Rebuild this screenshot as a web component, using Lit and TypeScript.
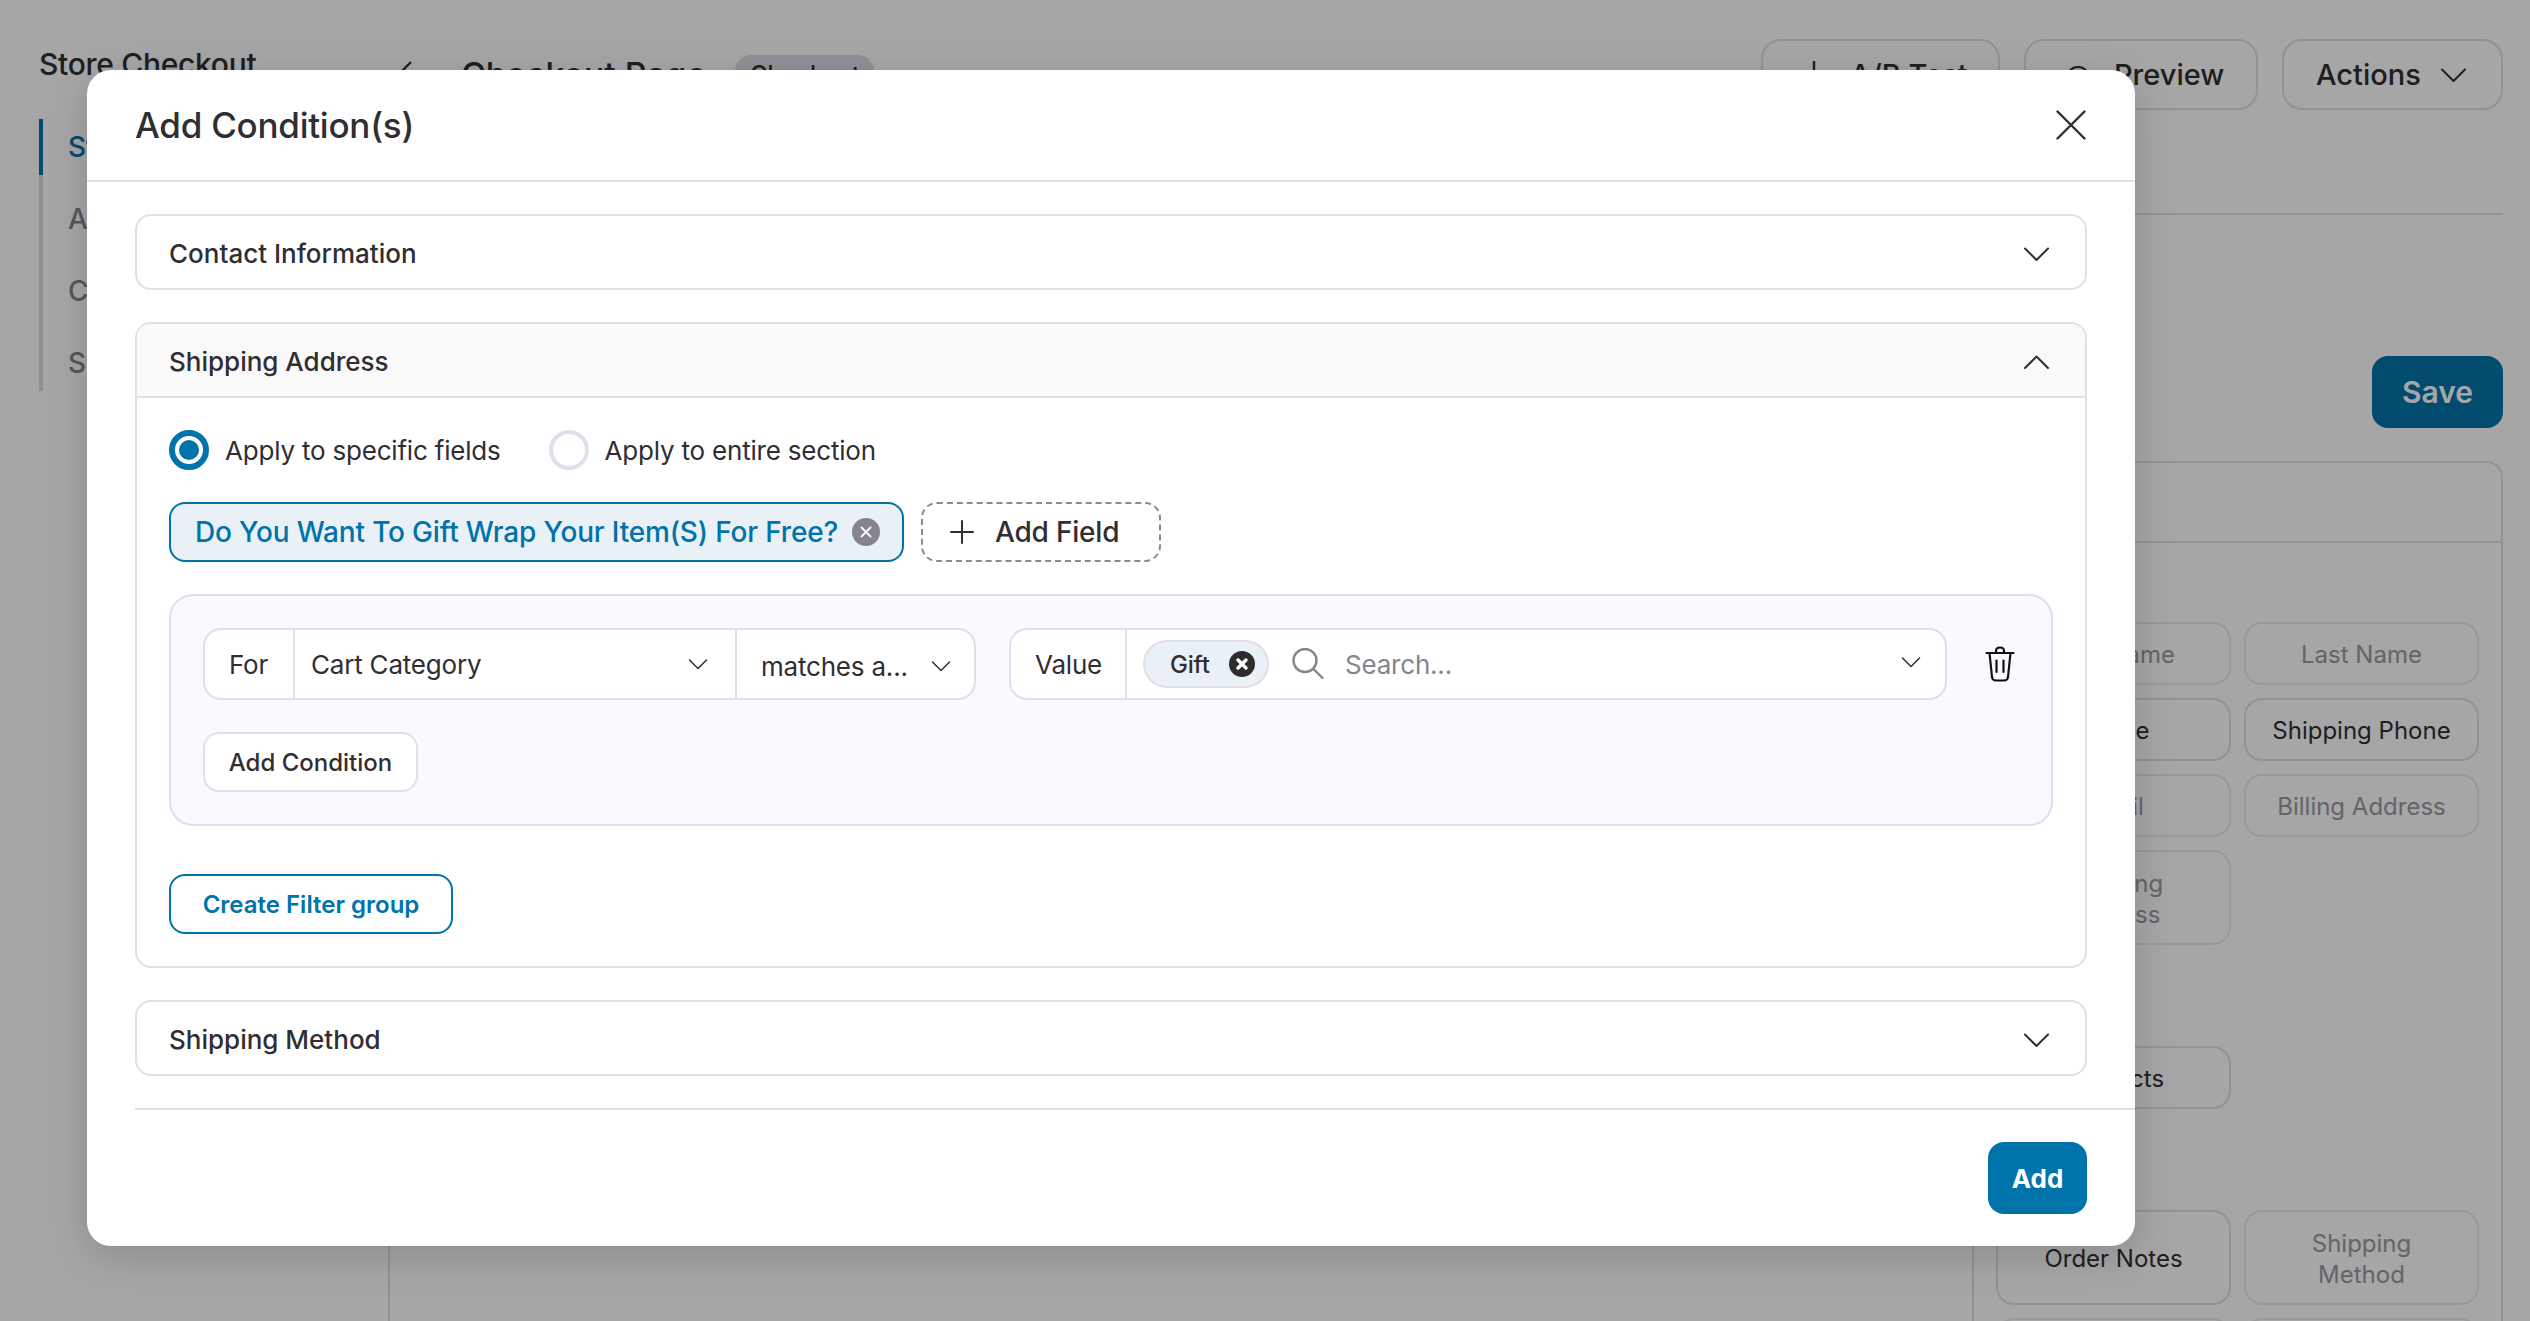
import { LitElement, html, css, svg } from "lit";
import { customElement } from "lit/decorators.js";

const chevDown = svg`<path d="M2 2.5 L13.5 14 L25 2.5" fill="none" stroke="currentColor" stroke-width="2" stroke-linecap="round" stroke-linejoin="round"/>`;
const chevUp = svg`<path d="M2 14 L13.5 2.5 L25 14" fill="none" stroke="currentColor" stroke-width="2" stroke-linecap="round" stroke-linejoin="round"/>`;

@customElement("app-root")
export class AppRoot extends LitElement {
  static styles = css`
    :host { display: block; width: 2530px; height: 1321px; overflow: hidden; position: relative; background: #fff; font-family: Inter, "Liberation Sans", sans-serif; color: #302e33; }
    * { box-sizing: border-box; }
    svg { display: block; flex: none; }

    .page { display: grid; grid-template-columns: 349px 1fr; height: 1321px; padding: 39px 27px 0 39px; overflow: hidden; }
    .side-title { font-size: 30px; font-weight: 500; letter-spacing: -.3px; line-height: 36px; height: 80px; padding-top: 7px; white-space: nowrap; }
    .nav { display: flex; flex-direction: column; gap: 16px; border-left: 4px solid #d9d9e6; }
    .nav-item { height: 56px; margin-left: -4px; padding-left: 25px; border-left: 4px solid transparent; display: flex; align-items: center; font-size: 28px; font-weight: 500; color: #85848f; }
    .nav-item.on { border-left-color: #0073aa; color: #0073aa; }

    .main { min-width: 0; display: flex; flex-direction: column; }
    .topbar { height: 71px; display: flex; align-items: center; }
    .back { width: 16px; height: 30px; margin-left: 8px; color: #302e33; }
    .page-title { margin-left: 49px; font-size: 33.8px; font-weight: 500; white-space: nowrap; }
    .page-tag { margin-left: 29px; width: 139px; height: 40px; border-radius: 16px; background: #dddde8; display: flex; align-items: center; justify-content: center; font-size: 24px; font-weight: 500; }
    .spacer { flex: 1; }
    .top-btn { height: 71px; border: 2px solid #e0dfea; border-radius: 20px; display: flex; align-items: center; font-size: 29px; font-weight: 500; margin-left: 24px; white-space: nowrap; }
    .ab { width: 239px; gap: 24px; padding-left: 39px; }
    .prev { width: 234px; gap: 24px; padding-left: 40px; }
    .act { width: 221px; gap: 19px; padding-left: 32px; }
    .ico-ab { width: 24px; height: 34px; }
    .ico-eye { width: 24px; height: 24px; margin-top: 6px; }
    .ico-act { width: 27px; height: 16px; }
    .rule { height: 2px; background: #e0dfea; margin-top: 103px; }
    .save-row { display: flex; justify-content: flex-end; margin-top: 141px; }
    .save { width: 131px; height: 72px; border-radius: 16px; background: #0073aa; color: #fff; font-size: 30px; font-weight: 600; display: flex; align-items: center; justify-content: center; }
    .builder { margin-top: 33px; flex: 1; border: 2px solid #e0dfea; border-bottom: 0; border-radius: 16px 16px 0 0; display: grid; grid-template-columns: 1582px 1fr; }
    .panel { border-left: 2px solid #e0dfea; padding: 0 22px; }
    .panel-head { height: 80px; margin: 0 -22px; border-bottom: 2px solid #e0dfea; }
    .fields { display: grid; grid-template-columns: 235px 235px; gap: 13px 13px; }
    .fields.g1 { margin-top: 79px; }
    .fields.g2 { margin-top: 101px; }
    .fields.g3 { margin-top: 101px; }
    .f { height: 63px; border: 2px solid #ebebf2; border-radius: 18px; display: flex; align-items: center; justify-content: center; text-align: center; font-size: 24px; line-height: 31px; color: #9a99a3; padding-top: 2px; }
    .f.tall { height: 95px; }
    .f.en { border-color: #e0dfea; color: #302e33; }

    .overlay { position: absolute; inset: 0; background: rgba(0,0,0,.35); padding: 70px 0 0 87px; }
    .modal { width: 2048px; height: 1176px; background: #fff; border-radius: 24px; box-shadow: 0 10px 40px rgba(0,0,0,.16); display: flex; flex-direction: column; }
    .m-head { height: 112px; flex: none; border-bottom: 2px solid #e0dfea; padding: 0 49px 0 48px; display: flex; align-items: center; justify-content: space-between; }
    .m-title { font-size: 35px; font-weight: 500; letter-spacing: -.25px; }
    .close { width: 30px; height: 30px; color: #302e33; }
    .m-body { padding: 32px 48px; display: flex; flex-direction: column; gap: 32px; }
    .acc { border: 2px solid #e0dfea; border-radius: 16px; overflow: hidden; }
    .acc-head { height: 72px; padding: 2px 35px 0 32px; display: flex; align-items: center; justify-content: space-between; font-size: 26px; font-weight: 500; }
    .acc-head.open { height: 74px; background: #f9f9f9; border-bottom: 2px solid #e0dfea; }
    .chev { width: 27px; height: 16px; color: #302e33; margin-top: 2px; }
    .acc-body { padding: 32px; display: flex; flex-direction: column; }
    .radios { display: flex; align-items: center; height: 40px; font-size: 26px; letter-spacing: -.2px; }
    .radio { width: 40px; height: 40px; border-radius: 50%; border: 4px solid #e0dfea; background: #fff; flex: none; margin-right: 16px; }
    .radio.on { border: 6px solid #0073aa; padding: 4px; }
    .radio.on i { display: block; width: 20px; height: 20px; border-radius: 50%; background: #0073aa; }
    .radios .gap { width: 48px; }
    .chips { display: flex; gap: 17px; margin-top: 32px; }
    .chip { width: 735px; height: 60px; border: 2px solid #0073aa; border-radius: 16px; background: #e9f1f6; color: #0073aa; font-size: 28px; font-weight: 500; letter-spacing: -.17px; display: flex; align-items: center; padding: 0 22px 0 24px; justify-content: space-between; white-space: nowrap; }
    .chip-x { width: 28px; height: 28px; }
    .add-field { width: 240px; height: 60px; border: 2px dashed #8a8994; border-radius: 16px; font-size: 28px; font-weight: 500; letter-spacing: -.2px; display: flex; align-items: center; gap: 21px; padding-left: 27px; }
    .plus { width: 24px; height: 24px; }
    .box { margin-top: 32px; border: 2px solid #e0dfea; border-radius: 24px; background: #f9f9ff; padding: 32px; }
    .row { display: flex; height: 72px; }
    .group { height: 72px; border: 2px solid #e0dfea; border-radius: 18px; background: #fff; display: flex; align-items: stretch; font-size: 26px; letter-spacing: -.2px; }
    .group.g-for { width: 773px; flex: none; margin-right: 33px; }
    .group.g-val { flex: 1; }
    .cell { display: flex; align-items: center; border-left: 2px solid #e0dfea; }
    .cell:first-child { border-left: 0; }
    .c-for { width: 88px; padding-left: 24px; }
    .c-cart { width: 442px; padding: 0 27px 0 16px; justify-content: space-between; }
    .c-match { flex: 1; padding: 4px 23px 0 24px; justify-content: space-between; }
    .c-lbl { width: 114px; padding-left: 24px; }
    .c-search { flex: 1; padding: 0 24px 0 16px; }
    .sm-chev { width: 20px; height: 12px; color: #302e33; }
    .sm-chev.up4 { margin-top: -4px; }
    .tag { width: 126px; height: 48px; border: 2px solid #e0dfea; border-radius: 24px; background: #e9f1f6; display: flex; align-items: center; justify-content: space-between; padding: 0 12px 0 25px; font-size: 24px; font-weight: 500; }
    .tag-x { width: 26px; height: 26px; }
    .ico-search { width: 32px; height: 32px; margin-left: 23px; margin-right: 21px; color: #85848f; }
    .placeholder { flex: 1; color: #85848f; }
    .trash-cell { width: 72px; flex: none; padding-left: 33px; display: flex; align-items: center; justify-content: center; }
    .trash { width: 30px; height: 36px; color: #111; }
    .btn-soft { margin-top: 32px; width: 215px; height: 60px; border: 2px solid #e0dfea; border-radius: 16px; background: #fff; display: flex; align-items: center; justify-content: center; font-size: 24px; font-weight: 500; }
    .btn-line { margin-top: 48px; width: 284px; height: 60px; border: 2px solid #0073aa; border-radius: 16px; color: #0073aa; display: flex; align-items: center; justify-content: center; font-size: 24px; font-weight: 600; }
    .m-foot { margin-left: 48px; border-top: 2px solid #e0dfea; padding: 32px 48px 0 0; display: flex; justify-content: flex-end; }
    .btn-add { width: 99px; height: 72px; border-radius: 16px; background: #0073aa; color: #fff; font-size: 26px; font-weight: 700; display: flex; align-items: center; justify-content: center; }
  `;

  renderBackground() {
    return html`
      <div class="page">
        <div>
          <div class="side-title">Store Checkout</div>
          <div class="nav">
            <div class="nav-item on">Steps</div>
            <div class="nav-item">Analytics</div>
            <div class="nav-item">Contacts</div>
            <div class="nav-item">Settings</div>
          </div>
        </div>
        <div class="main">
          <div class="topbar">
            <svg class="back" viewBox="0 0 16 30"><path d="M15 2 L2 15 L15 28" fill="none" stroke="currentColor" stroke-width="2.4"/></svg>
            <div class="page-title">Checkout Page</div>
            <div class="page-tag">Checkout</div>
            <div class="spacer"></div>
            <div class="top-btn ab">
              <svg class="ico-ab" viewBox="0 0 24 34"><path d="M12 3 V31" fill="none" stroke="currentColor" stroke-width="2.4"/></svg>
              <span>A/B Test</span>
            </div>
            <div class="top-btn prev">
              <svg class="ico-eye" viewBox="0 0 24 24"><circle cx="12" cy="12" r="11" fill="none" stroke="currentColor" stroke-width="2.2"/><circle cx="12" cy="12" r="4" fill="none" stroke="currentColor" stroke-width="2.2"/></svg>
              <span>Preview</span>
            </div>
            <div class="top-btn act"><span>Actions</span><svg class="ico-act" viewBox="0 0 27 16">${chevDown}</svg></div>
          </div>
          <div class="rule"></div>
          <div class="save-row"><div class="save">Save</div></div>
          <div class="builder">
            <div></div>
            <div class="panel">
              <div class="panel-head"></div>
              <div class="fields g1">
                <div class="f">First Name</div><div class="f">Last Name</div>
                <div class="f en">Phone</div><div class="f en">Shipping Phone</div>
                <div class="f">Email</div><div class="f">Billing Address</div>
                <div class="f tall">Shipping<br />Address</div>
              </div>
              <div class="fields g2"><div class="f en">Products</div></div>
              <div class="fields g3">
                <div class="f tall en">Order Notes</div><div class="f tall">Shipping<br />Method</div>
                <div class="f tall"></div><div class="f tall"></div>
              </div>
            </div>
          </div>
        </div>
      </div>`;
  }

  renderModal() {
    return html`
      <div class="overlay">
        <div class="modal">
          <div class="m-head">
            <div class="m-title">Add Condition(s)</div>
            <svg class="close" viewBox="0 0 30 30"><path d="M1.5 1.5 L28.5 28.5 M28.5 1.5 L1.5 28.5" fill="none" stroke="currentColor" stroke-width="2.4" stroke-linecap="round"/></svg>
          </div>
          <div class="m-body">
            <div class="acc"><div class="acc-head"><span>Contact Information</span><svg class="chev" viewBox="0 0 27 16">${chevDown}</svg></div></div>
            <div class="acc">
              <div class="acc-head open"><span>Shipping Address</span><svg class="chev" viewBox="0 0 27 16">${chevUp}</svg></div>
              <div class="acc-body">
                <div class="radios">
                  <div class="radio on"><i></i></div><span>Apply to specific fields</span>
                  <div class="gap"></div>
                  <div class="radio"></div><span>Apply to entire section</span>
                </div>
                <div class="chips">
                  <div class="chip">
                    <span>Do You Want To Gift Wrap Your Item(S) For Free?</span>
                    <svg class="chip-x" viewBox="0 0 28 28"><circle cx="14" cy="14" r="14" fill="#85848f"/><path d="M9.5 9.5 L18.5 18.5 M18.5 9.5 L9.5 18.5" stroke="#fff" stroke-width="1.8" stroke-linecap="round"/></svg>
                  </div>
                  <div class="add-field">
                    <svg class="plus" viewBox="0 0 24 24"><path d="M12 1 V23 M1 12 H23" stroke="currentColor" stroke-width="2" stroke-linecap="round"/></svg>
                    <span>Add Field</span>
                  </div>
                </div>
                <div class="box">
                  <div class="row">
                    <div class="group g-for">
                      <div class="cell c-for">For</div>
                      <div class="cell c-cart"><span>Cart Category</span><svg class="sm-chev" viewBox="0 0 27 16">${chevDown}</svg></div>
                      <div class="cell c-match"><span>matches a...</span><svg class="sm-chev" viewBox="0 0 27 16">${chevDown}</svg></div>
                    </div>
                    <div class="group g-val">
                      <div class="cell c-lbl">Value</div>
                      <div class="cell c-search">
                        <div class="tag"><span>Gift</span>
                          <svg class="tag-x" viewBox="0 0 26 26"><circle cx="13" cy="13" r="13" fill="#2f2c30"/><path d="M9 9 L17 17 M17 9 L9 17" stroke="#fff" stroke-width="3.4" stroke-linecap="round"/></svg>
                        </div>
                        <svg class="ico-search" viewBox="0 0 32 32"><circle cx="13" cy="12.5" r="11.5" fill="none" stroke="currentColor" stroke-width="2.4"/><path d="M21.5 21 L30.5 30" stroke="currentColor" stroke-width="2.4" stroke-linecap="round"/></svg>
                        <span class="placeholder">Search...</span>
                        <svg class="sm-chev up4" viewBox="0 0 27 16">${chevDown}</svg>
                      </div>
                    </div>
                    <div class="trash-cell">
                      <svg class="trash" viewBox="0 0 30 36"><path d="M1.5 7 H28.5 M4.5 7 L7 31 Q7.4 34.5 11 34.5 H19 Q22.6 34.5 23 31 L25.5 7 M11 7 V5 Q11 1.5 15 1.5 Q19 1.5 19 5 V7 M11.5 14.5 V26 M18.5 14.5 V26" fill="none" stroke="currentColor" stroke-width="2.2" stroke-linecap="round" stroke-linejoin="round"/></svg>
                    </div>
                  </div>
                  <div class="btn-soft">Add Condition</div>
                </div>
                <div class="btn-line">Create Filter group</div>
              </div>
            </div>
            <div class="acc"><div class="acc-head"><span>Shipping Method</span><svg class="chev" viewBox="0 0 27 16">${chevDown}</svg></div></div>
          </div>
          <div class="m-foot"><div class="btn-add">Add</div></div>
        </div>
      </div>`;
  }

  render() {
    return html`${this.renderBackground()}${this.renderModal()}`;
  }
}
